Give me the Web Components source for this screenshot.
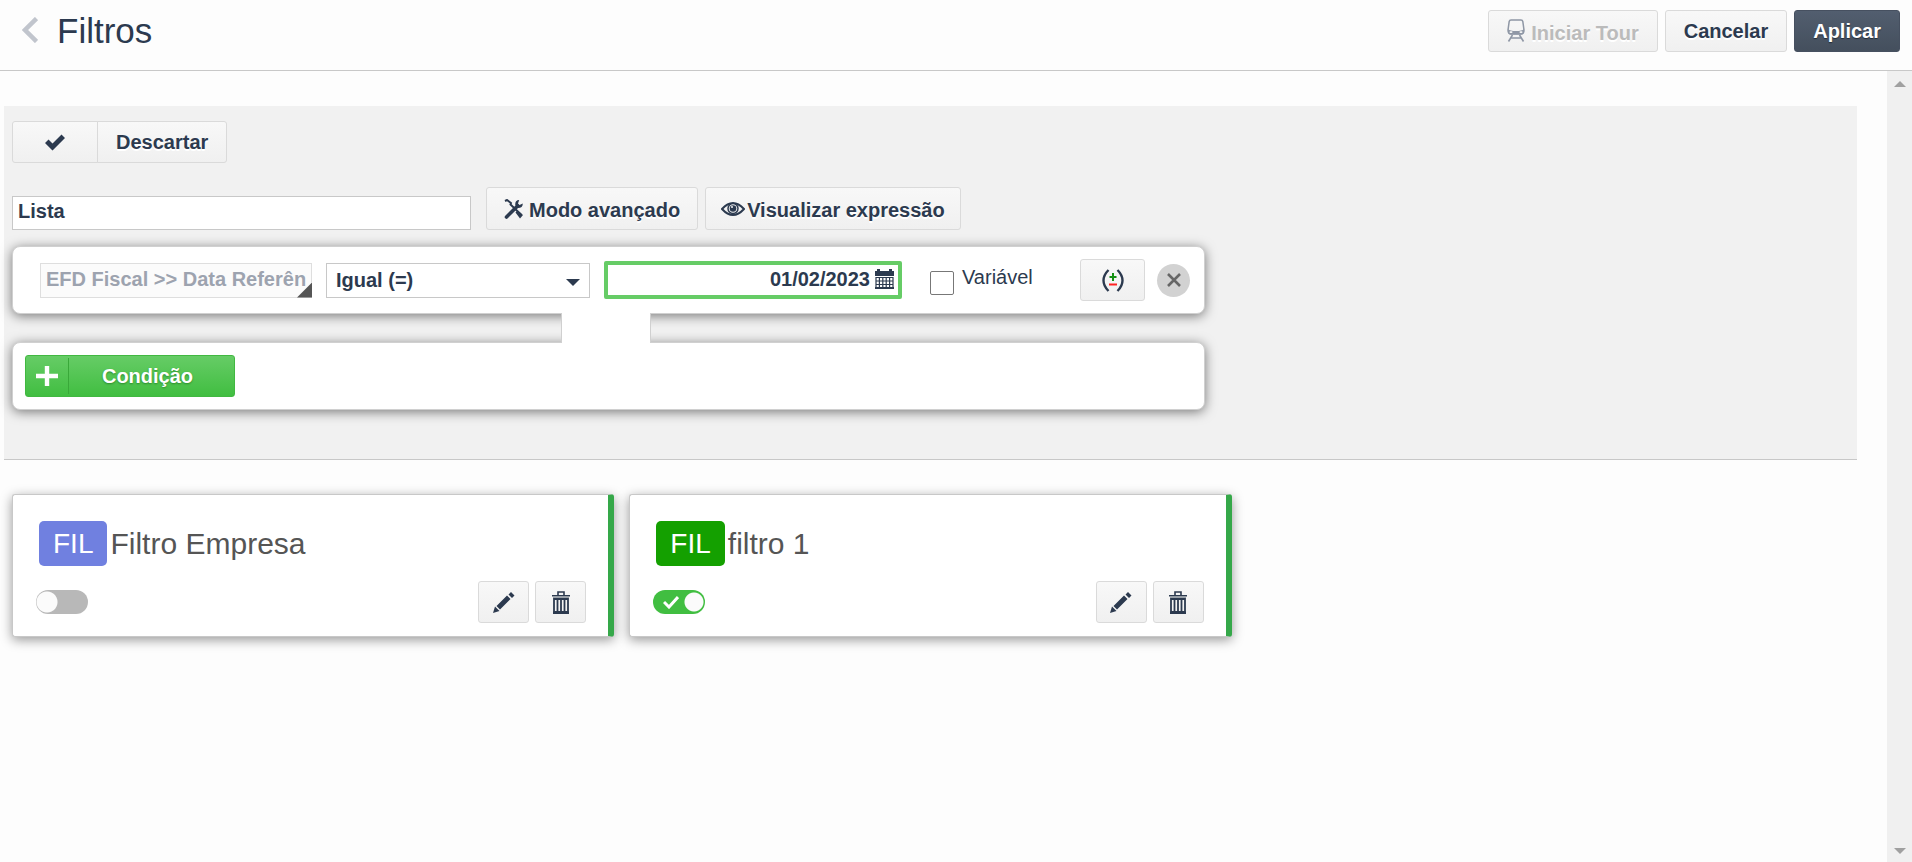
<!DOCTYPE html>
<html lang="pt-BR">
<head>
<meta charset="utf-8">
<meta name="viewport" content="width=device-width, initial-scale=1">
<title>Filtros</title>
<style>
    body {
        --ink: #2c3a4f;
        --line: #c8c8c8;
        margin: 0;
        height: 100vh;
        background: #fdfdfd;
        color: var(--ink);
        font-family: Arial, "Liberation Sans", sans-serif;
        font-size: 20px;
    }
</style>
</head>
<body>
<filter-page>
    <page-header slot="header" heading="Filtros">
        <ui-button icon="train" disabled>Iniciar Tour</ui-button>
        <ui-button>Cancelar</ui-button>
        <ui-button variant="dark">Aplicar</ui-button>
    </page-header>
    <filter-editor name="Lista">
        <filter-condition field="EFD Fiscal &gt;&gt; Data Referência" operator="Igual (=)" value="01/02/2023"></filter-condition>
    </filter-editor>
    <filter-list>
        <filter-card name="Filtro Empresa" color="#7080e0"></filter-card>
        <filter-card name="filtro 1" color="#14a000" active></filter-card>
    </filter-list>
</filter-page>

<script>
// Icon bodies. Each one is [viewBox, markup].
const ICONS = {
    back: ['0 0 16 26', '<path d="M14.500 1.500 3 13l11.500 11.500" fill="none" stroke="currentColor" stroke-width="4.500"/>'],
    check: ['0 0 22 18', '<path d="M1 10 4.500 6.500 8.500 10.500 17.500 1.500 21 5 8.500 17.500z" fill="currentColor"/>'],
    train: ['0 0 18 23', '<path d="M4 1h10q1.500 0 1.800 1.500L17 11q0 4-3 4H4q-3 0-3-4L2.200 2.500Q2.500 1 4 1z" fill="none" stroke="currentColor" stroke-width="1.500"/><path d="M1 10q2 2 8 2t8-2v2.500q0 3-3 3H4q-3 0-3-3z" fill="currentColor"/><rect x="2.500" y="12.200" width="3" height="1.800" rx=".9" fill="#f4f4f4"/><rect x="12.500" y="12.200" width="3" height="1.800" rx=".9" fill="#f4f4f4"/><path d="M5.500 16 1.500 22.500M12.500 16l4 6.500M4 19h10" fill="none" stroke="currentColor" stroke-width="1.600"/>'],
    tools: ['0 0 20 20', '<path d="M1 2 3 1l4 3-.5 1.500L17.500 16" fill="none" stroke="currentColor" stroke-width="2"/><path d="m11.500 13.500 2-2 5.500 4.500-3 3.500z" fill="currentColor"/><path d="M2.500 18 13.500 7" stroke="currentColor" stroke-width="3.600" stroke-linecap="round"/><path d="M18.800 4.500 15.500 6 14 4.600 15.200 1q-4.200 0-4 5l2.800 3q4.800 0 4.800-4.500z" fill="currentColor"/>'],
    eye: ['0 0 24 14', '<path d="M1 7Q12-5 23 7 12 19 1 7z" fill="none" stroke="currentColor" stroke-width="2"/><circle cx="12" cy="6.500" r="5" fill="none" stroke="currentColor" stroke-width="1.500"/><circle cx="12" cy="6.500" r="3.300" fill="currentColor"/><circle cx="11" cy="5" r="1" fill="#f5f5f5"/>'],
    calendar: ['0 0 19 20', '<path d="M0 2h2V0h3v2h9V0h3v2h2v5H0z" fill="currentColor"/><path d="M1 8.500h17v10.500H1zM1 12h17M1 15.500h17M4.400 8.500V19M7.800 8.500V19M11.200 8.500V19M14.600 8.500V19" fill="none" stroke="currentColor" stroke-width="1.200"/><path d="M0 18h19v2H0z" fill="currentColor"/>'],
    plus: ['0 0 22 20', '<path d="M11 0v20M0 10h22" stroke="currentColor" stroke-width="4.400"/>'],
    parens: ['0 0 22 23', '<path d="M6.500 1Q1.500 6 1.500 11.500T6.500 22M15.500 1Q20.500 6 20.500 11.500T15.500 22" fill="none" stroke="currentColor" stroke-width="2.400"/><path d="M11 4v8M7.500 8h7" stroke="#149014" stroke-width="2"/><path d="M7 15.500h8" stroke="#f22" stroke-width="2"/>'],
    close: ['0 0 14 14', '<path d="m1 1 12 12m0-12L1 13" stroke="currentColor" stroke-width="2.600"/>'],
    pencil: ['0 0 22 22', '<path d="m0 22 2-6.500L6.500 20zM3.500 15 14 4.500 17.500 8 7 18.500zM15.500 3.500 18 1 21.500 4.500 19 7z" fill="currentColor"/>'],
    trash: ['0 0 18 23', '<path d="M6 4V1h6v3" fill="none" stroke="currentColor" stroke-width="1.600"/><path d="M0 4h18v1.500H0z" fill="currentColor"/><path d="M1 5.500h16V7H1z" fill="#9aa2aa"/><path d="M2 8h14v13H2zM5.500 8v13M9 8v13M12.500 8v13" fill="none" stroke="currentColor" stroke-width="1.800"/><path d="M1 20.500h16V23H1z" fill="currentColor"/>']
};

// Gives the element an open shadow root with the markup.
function mount(el, markup) {
    const tpl = document.createElement('template');
    tpl.innerHTML = `<style>*, *::before, *::after { box-sizing: border-box; }</style>${markup}`;
    el.attachShadow({ mode: 'open' }).append(tpl.content.cloneNode(true));
}

// ## Icon ##
class UiIcon extends HTMLElement {
    connectedCallback() {
        if (this.shadowRoot) return;
        const [box, body] = ICONS[this.getAttribute('name')];
        const [, , w, h] = box.split(' ');
        mount(this, `
            <style>
                :host { display: inline-flex; flex: none; }
                svg { display: block; }
            </style>
            <svg viewBox="${box}" width="${w}" height="${h}" aria-hidden="true">${body}</svg>
        `);
    }
}

// ## Button ##
class UiButton extends HTMLElement {
    connectedCallback() {
        if (this.shadowRoot) return;
        const icon = this.getAttribute('icon');
        const label = this.getAttribute('label');
        mount(this, `
            <style>
                :host { display: inline-flex; flex: none; }
                button {
                    display: flex;
                    align-items: center;
                    justify-content: center;
                    gap: var(--button-gap, 6px);
                    width: 100%;
                    min-height: var(--button-height, 42px);
                    padding: 0 var(--button-pad, 18px);
                    border: 1px solid #dadada;
                    border-radius: var(--button-radius, 3px);
                    background: linear-gradient(#f8f8f8, #f0f0f0);
                    color: var(--ink);
                    font: bold 20px/24px Arial, "Liberation Sans", sans-serif;
                    white-space: nowrap;
                    text-shadow: 0 2px 0 #fff;
                    cursor: pointer;
                }
                :host([icon]) .text { padding-top: 3px; }
                :host([disabled]) button { color: #bbb; cursor: default; }
                :host([disabled]) ui-icon { color: #8f97a5; padding-bottom: 2px; }
                :host([variant="dark"]) button {
                    border-color: #465060;
                    background: linear-gradient(#525e6f, #444f5d);
                    color: #fff;
                    text-shadow: 0 1px 1px #222b38;
                }
            </style>
            <button type="button" ${label ? `aria-label="${label}"` : ''} ${this.hasAttribute('disabled') ? 'disabled' : ''}>
                ${icon ? `<ui-icon name="${icon}"></ui-icon>` : ''}
                ${label ? '' : '<span class="text"><slot></slot></span>'}
            </button>
        `);
    }
}

class FilterPage extends HTMLElement {
    constructor() {
        super();
        mount(this, `
            <style>
                :host { display: flex; flex-direction: column; height: 100%; }
                .body { display: flex; flex: 1; min-height: 0; }
                main { flex: 1; min-width: 0; padding: 35px 30px 0 4px; overflow: hidden; }
                .track {
                    display: flex;
                    flex-direction: column;
                    justify-content: space-between;
                    align-items: center;
                    width: 25px;
                    padding: 10px 0 8px;
                    background: #f0f0f0;
                }
                .up, .down { border: 6px solid transparent; border-width: 0 6px 6px; border-bottom-color: #a0a0a0; }
                .down { border-width: 6px 6px 0; border-top-color: #a0a0a0; }
            </style>
            <slot name="header"></slot>
            <div class="body">
                <main><slot></slot></main>
                <div class="track" aria-hidden="true"><span class="up"></span><span class="down"></span></div>
            </div>
        `);
    }
}

class PageHeader extends HTMLElement {
    connectedCallback() {
        if (this.shadowRoot) return;
        mount(this, `
            <style>
                :host { display: block; }
                header {
                    display: flex;
                    align-items: center;
                    padding: 10px 12px 18px 22px;
                    border-bottom: 1px solid var(--line);
                }
                .back { padding: 0; border: 0; background: none; color: #c1c5cd; cursor: pointer; }
                h1 { flex: 1; margin: 0 0 0 19px; font-size: 35px; font-weight: normal; line-height: 42px; }
                .actions { display: flex; gap: 7px; }
            </style>
            <header>
                <button class="back" type="button" aria-label="Voltar"><ui-icon name="back"></ui-icon></button>
                <h1>${this.getAttribute('heading')}</h1>
                <div class="actions"><slot></slot></div>
            </header>
        `);
    }
}

// ## Editor panel ##
class FilterEditor extends HTMLElement {
    connectedCallback() {
        if (this.shadowRoot) return;
        mount(this, `
            <style>
                :host {
                    display: block;
                    padding: 15px 9px 49px 8px;
                    border-bottom: 1px solid var(--line);
                    background: #f1f1f1;
                }
                .group { display: flex; }
                .group ui-button:first-child { width: 86px; --button-radius: 3px 0 0 3px; }
                .group ui-button:last-child { margin-left: -1px; --button-radius: 0 3px 3px 0; }
                .tools { display: flex; align-items: flex-end; gap: 7px; margin: 24px 0 16px; }
                .name {
                    width: 25%;
                    height: 34px;
                    margin-right: 8px;
                    padding: 0 5px 3px;
                    border: 1px solid var(--line);
                    background: #fff;
                    color: var(--ink);
                    font: bold 20px Arial, "Liberation Sans", sans-serif;
                }
                .tools ui-button { --button-height: 43px; --button-pad: 17px; --button-gap: 5px; }
                .tools ui-button:last-child { --button-pad: 15px; --button-gap: 2px; }
                .rules { width: 65%; }
                .joint {
                    position: relative;
                    z-index: 1;
                    width: 90px;
                    height: 30px;
                    margin: -1px 0 -1px 46%;
                    border: solid #d0d0d0;
                    border-width: 0 1px;
                    background: #fff;
                }
                .add-box {
                    display: flex;
                    padding: 12px;
                    border: 1px solid #d0d0d0;
                    border-radius: 8px;
                    background: #fff;
                    box-shadow: 0 2px 12px rgba(0, 0, 0, .5);
                }
                .add {
                    display: flex;
                    align-items: center;
                    width: 210px;
                    height: 42px;
                    padding: 0;
                    border: 1px solid #41b841;
                    border-radius: 3px;
                    background: linear-gradient(#66cc66, #41be41);
                    color: #fff;
                    font: bold 20px/24px Arial, "Liberation Sans", sans-serif;
                    text-shadow: 0 1px 2px #2b8a2b;
                    cursor: pointer;
                }
                .add ui-icon { padding: 8px 10px; border-right: 1px solid #39a839; }
                .add span { flex: 1; padding-right: 8px; }
            </style>
            <div class="group">
                <ui-button icon="check" label="Confirmar"></ui-button>
                <ui-button>Descartar</ui-button>
            </div>
            <div class="tools">
                <input class="name" type="text" aria-label="Nome" value="${this.getAttribute('name')}">
                <ui-button icon="tools">Modo avançado</ui-button>
                <ui-button icon="eye">Visualizar expressão</ui-button>
            </div>
            <div class="rules">
                <slot></slot>
                <div class="joint"></div>
                <div class="add-box">
                    <button class="add" type="button"><ui-icon name="plus"></ui-icon><span>Condição</span></button>
                </div>
            </div>
        `);
    }
}

// ## One condition row ##
class FilterCondition extends HTMLElement {
    connectedCallback() {
        if (this.shadowRoot) return;
        mount(this, `
            <style>
                :host {
                    display: flex;
                    align-items: center;
                    gap: 14px;
                    padding: 12px 14px 12px 27px;
                    border: 1px solid #d0d0d0;
                    border-radius: 8px;
                    background: #fff;
                    box-shadow: 0 2px 12px rgba(0, 0, 0, .5);
                    box-sizing: border-box;
                }
                input, select {
                    color: var(--ink);
                    font: bold 20px Arial, "Liberation Sans", sans-serif;
                }
                .field, .operator { position: relative; display: flex; flex: 0 1 272px; min-width: 0; }
                .field input {
                    width: 100%;
                    height: 35px;
                    padding: 0 5px 2px;
                    border: 1px solid #dedede;
                    background: #fbfbfb;
                    color: #9da3af;
                }
                /* dark corner marks a field opened in a picker */
                .field::after {
                    content: "";
                    position: absolute;
                    right: 0;
                    bottom: 0;
                    width: 15px;
                    height: 15px;
                    background: #555;
                    clip-path: polygon(100% 0, 100% 100%, 0 100%);
                }
                .operator { flex-basis: 264px; }
                select {
                    width: 100%;
                    height: 35px;
                    padding: 0 30px 0 9px;
                    border: 1px solid var(--line);
                    border-radius: 0;
                    background: #fff;
                    appearance: none;
                }
                .operator::after {
                    content: "";
                    position: absolute;
                    right: 10px;
                    top: 16px;
                    border: 7px solid transparent;
                    border-top-color: var(--ink);
                    border-bottom: 0;
                    pointer-events: none;
                }
                .date {
                    display: flex;
                    align-items: center;
                    gap: 5px;
                    flex: 0 1 298px;
                    min-width: 0;
                    height: 38px;
                    padding: 0 4px 0 0;
                    border: 4px solid #66cc66;
                    border-radius: 2px;
                }
                .date input { flex: 1; min-width: 0; padding: 0 0 2px; border: 0; text-align: right; outline: 0; }
                .date button { padding: 0; border: 0; background: none; color: var(--ink); cursor: pointer; }
                label {
                    display: flex;
                    gap: 8px;
                    height: 30px;
                    margin: 0 auto 0 14px;
                    line-height: 24px;
                }
                label input {
                    appearance: none;
                    align-self: flex-end;
                    width: 24px;
                    height: 24px;
                    margin: 0;
                    border: 1px solid #777;
                    border-radius: 2px;
                    background: #fff;
                }
                ui-button { width: 65px; }
                .remove {
                    display: flex;
                    align-items: center;
                    justify-content: center;
                    flex: none;
                    width: 33px;
                    height: 33px;
                    margin-left: -2px;
                    padding: 0;
                    border: 0;
                    border-radius: 50%;
                    background: #d2d2d2;
                    color: #666;
                    cursor: pointer;
                }
            </style>
            <div class="field"><input type="text" readonly aria-label="Campo"></div>
            <div class="operator">
                <select aria-label="Operador"><option>${this.getAttribute('operator')}</option></select>
            </div>
            <div class="date">
                <input type="text" aria-label="Valor" value="${this.getAttribute('value')}">
                <button type="button" aria-label="Abrir calendário"><ui-icon name="calendar"></ui-icon></button>
            </div>
            <label><input type="checkbox">Variável</label>
            <ui-button icon="parens" label="Agrupar"></ui-button>
            <button class="remove" type="button" aria-label="Remover"><ui-icon name="close"></ui-icon></button>
        `);
        this.shadowRoot.querySelector('.field input').value = this.getAttribute('field');
    }
}

// ## Saved filters ##
class FilterList extends HTMLElement {
    constructor() {
        super();
        mount(this, `
            <style>
                :host {
                    display: grid;
                    grid-template-columns: repeat(3, minmax(0, 1fr));
                    gap: 15px;
                    padding: 34px 8px 20px;
                    box-sizing: border-box;
                }
            </style>
            <slot></slot>
        `);
    }
}

class FilterCard extends HTMLElement {
    connectedCallback() {
        if (this.shadowRoot) return;
        mount(this, `
            <style>
                :host {
                    display: flex;
                    flex-direction: column;
                    gap: 15px;
                    padding: 26px 22px 13px 26px;
                    border: 1px solid var(--line);
                    border-right: 6px solid #35a849;
                    border-radius: 3px;
                    background: #fff;
                    box-shadow: 0 3px 12px rgba(0, 0, 0, .4);
                    box-sizing: border-box;
                }
                .title { display: flex; align-items: center; gap: 3px; color: #555; font-size: 30px; line-height: 45px; }
                .badge {
                    padding: 0 14px;
                    border-radius: 5px;
                    background: ${this.getAttribute('color')};
                    color: #fff;
                    font-size: 28px;
                }
                h2 { margin: 0; font: inherit; }
                .controls { display: flex; align-items: center; gap: 6px; }
                .switch { position: relative; display: flex; margin: 0 auto 0 -3px; }
                .switch input {
                    appearance: none;
                    width: 52px;
                    height: 24px;
                    margin: 0;
                    border-radius: 12px;
                    background: radial-gradient(circle at 11px 12px, #fbfbfb 10px, #b8b8b8 11px);
                }
                .switch input:checked { background: radial-gradient(circle at 41px 12px, #fbfbfb 9px, #41be41 10px); }
                .switch svg { position: absolute; left: 10px; top: 5px; display: none; pointer-events: none; }
                .switch input:checked + svg { display: block; }
                ui-button { width: 51px; --button-pad: 0px; }
            </style>
            <div class="title"><span class="badge">FIL</span><h2>${this.getAttribute('name')}</h2></div>
            <div class="controls">
                <span class="switch">
                    <input type="checkbox" aria-label="Ativar ${this.getAttribute('name')}" ${this.hasAttribute('active') ? 'checked' : ''}>
                    <svg width="16" height="14" viewBox="0 0 16 14" aria-hidden="true"><path d="m1 7 5 5 9-10" fill="none" stroke="#fff" stroke-width="3"/></svg>
                </span>
                <ui-button icon="pencil" label="Editar"></ui-button>
                <ui-button icon="trash" label="Excluir"></ui-button>
            </div>
        `);
    }
}

customElements.define('ui-icon', UiIcon);
customElements.define('ui-button', UiButton);
customElements.define('filter-page', FilterPage);
customElements.define('page-header', PageHeader);
customElements.define('filter-editor', FilterEditor);
customElements.define('filter-condition', FilterCondition);
customElements.define('filter-list', FilterList);
customElements.define('filter-card', FilterCard);
</script>
</body>
</html>
